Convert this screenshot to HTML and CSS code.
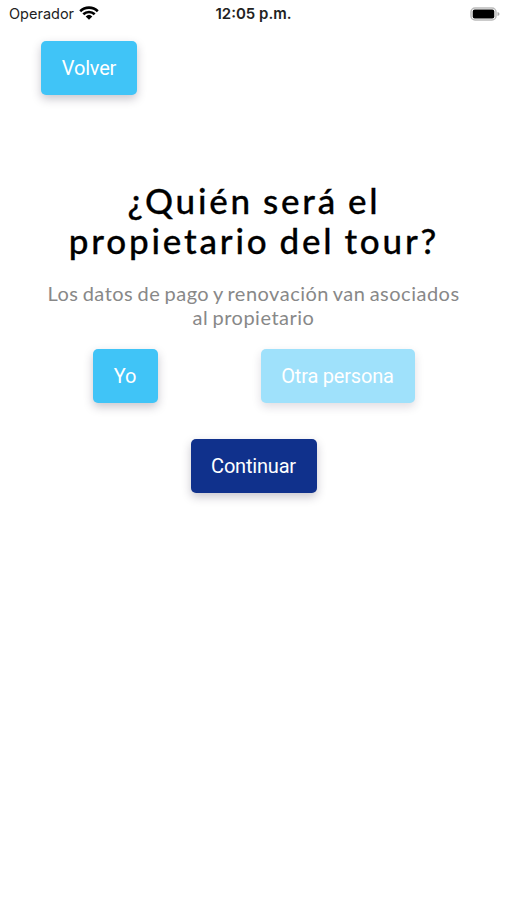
FILE: index.html
```html
<!DOCTYPE html>
<html lang="es">
<head>
<meta charset="utf-8">
<title>Propietario</title>
<link rel="stylesheet" href="styles.css">
</head>
<body>
<header class="status">
  <div class="carrier"><span>Operador</span>
    <svg class="wifi" viewBox="0 0 20 14"><path d="M1.2 5.2a12.6 12.6 0 0 1 17.6 0M4.3 8.3a8.2 8.2 0 0 1 11.4 0" fill="none" stroke="#000" stroke-width="2.6"/><path d="M6.7 10.4a4.8 4.8 0 0 1 6.6 0L10 13.7z"/></svg>
  </div>
  <div class="time">12:05 p.m.</div>
  <svg class="battery" viewBox="0 0 30 14"><rect x="1" y="1" width="25" height="12" rx="4" fill="none" stroke="#bbb" stroke-width="1.5"/><rect x="2.7" y="2.5" width="21.6" height="9" rx="2"/><path d="M27.5 5q2 .6 2 2t-2 2z" fill="#aaa"/></svg>
</header>
<main>
  <button class="btn back">Volver</button>
  <h1>¿Quién será el<br>propietario del tour?</h1>
  <p>Los datos de pago y renovación van asociados<br>al propietario</p>
  <div class="options">
    <button class="btn yo">Yo</button>
    <button class="btn other">Otra persona</button>
  </div>
  <button class="btn next">Continuar</button>
</main>
</body>
</html>
```
FILE: styles.css
```css
body { margin: 0; background: #fff; color: #000; font-family: Roboto, sans-serif; }
.status { height: 28px; display: grid; grid-template-columns: 1fr auto 1fr; align-items: center; padding: 0 7px 0 9px; font: 14.5px/28px Inter, sans-serif; color: #222; }
.carrier { display: flex; align-items: center; gap: 5px; }
.wifi { width: 20px; height: 14px; margin-top: -2px; }
.time { font-weight: 600; font-size: 15px; margin-left: -2px; }
.battery { width: 30px; height: 14px; justify-self: end; margin-top: -1px; }
main { display: flex; flex-direction: column; align-items: center; padding: 13px 0 40px; }
.btn { height: 54px; border: 0; border-radius: 5px; padding: 0; background: #40c4f7; color: #fff; font: 20px/54px Roboto, sans-serif; letter-spacing: -.2px; box-shadow: 0 4px 10px rgba(40, 30, 60, .25); }
.back { width: 96px; align-self: flex-start; margin-left: 41px; }
h1 { margin: 85px 0 0; font: 500 35px/40px Lato, sans-serif; letter-spacing: 2.8px; word-spacing: -1.6px; -webkit-text-stroke: .3px #000; text-align: center; white-space: nowrap; padding-left: 1px; }
p { margin: 21px 0 0; font: 20px/24px Lato, sans-serif; letter-spacing: .5px; word-spacing: -1.4px; color: #888; text-align: center; white-space: nowrap; }
.options { display: flex; gap: 103px; margin-top: 20px; }
.yo { width: 65px; }
.other { width: 154px; background: #9fe1fb; box-shadow: 0 4px 10px rgba(40, 30, 60, .15); }
.next { width: 126px; margin-top: 36px; background: #10318c; }
```
